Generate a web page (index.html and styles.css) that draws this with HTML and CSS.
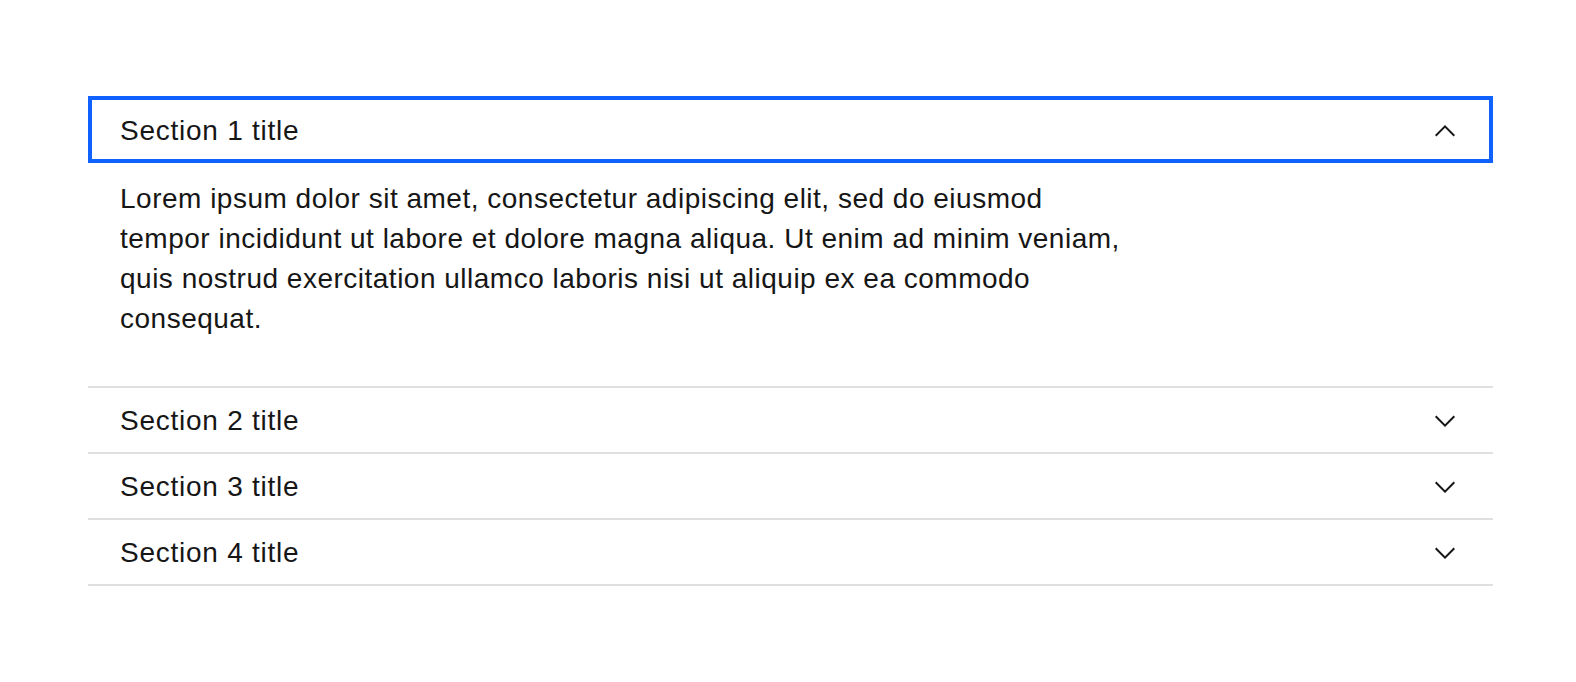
FILE: index.html
```html
<!DOCTYPE html>
<html lang="en">
<head>
<meta charset="utf-8">
<title>Accordion</title>
<link rel="stylesheet" href="styles.css">
</head>
<body>
<ul class="accordion">
  <li class="item open">
    <button class="heading focused" type="button" aria-expanded="true">
      <span class="title">Section 1 title</span>
      <svg class="chev" viewBox="0 0 16 16" width="32" height="32" aria-hidden="true"><path d="M8 5L13 10 12.3 10.7 8 6.4 3.7 10.7 3 10z"/></svg>
    </button>
    <div class="content">
      <p>Lorem ipsum dolor sit amet, consectetur adipiscing elit, sed do eiusmod tempor incididunt ut labore et dolore magna aliqua. Ut enim ad minim veniam, quis nostrud exercitation ullamco laboris nisi ut aliquip ex ea commodo consequat.</p>
    </div>
  </li>
  <li class="item">
    <button class="heading" type="button" aria-expanded="false">
      <span class="title">Section 2 title</span>
      <svg class="chev" viewBox="0 0 16 16" width="32" height="32" aria-hidden="true"><path d="M8 11L3 6 3.7 5.3 8 9.6 12.3 5.3 13 6z"/></svg>
    </button>
  </li>
  <li class="item">
    <button class="heading" type="button" aria-expanded="false">
      <span class="title">Section 3 title</span>
      <svg class="chev" viewBox="0 0 16 16" width="32" height="32" aria-hidden="true"><path d="M8 11L3 6 3.7 5.3 8 9.6 12.3 5.3 13 6z"/></svg>
    </button>
  </li>
  <li class="item">
    <button class="heading" type="button" aria-expanded="false">
      <span class="title">Section 4 title</span>
      <svg class="chev" viewBox="0 0 16 16" width="32" height="32" aria-hidden="true"><path d="M8 11L3 6 3.7 5.3 8 9.6 12.3 5.3 13 6z"/></svg>
    </button>
  </li>
</ul>
</body>
</html>
```
FILE: styles.css
```css
* { box-sizing: border-box; }
html, body { margin: 0; padding: 0; background: #ffffff; }
body {
  font-family: "Liberation Sans", Arial, sans-serif;
  color: #161616;
  padding-top: 96px;
  padding-left: 88px;
}
.accordion {
  list-style: none;
  margin: 0;
  padding: 0;
  width: 1405px;
}
.item {
  border-top: 2px solid #e0e0e0;
}
.item:last-child {
  border-bottom: 2px solid #e0e0e0;
}
.heading {
  position: relative;
  display: flex;
  align-items: center;
  justify-content: space-between;
  width: 100%;
  height: 64px;
  margin: 0;
  padding: 2px 32px 0;
  border: 0;
  background: transparent;
  font: inherit;
  color: inherit;
  text-align: left;
  cursor: pointer;
}
.heading.focused::before {
  content: "";
  position: absolute;
  top: -2px;
  left: 0;
  right: 0;
  bottom: -1px;
  border: 4px solid #0f62fe;
}
.title {
  font-size: 28px;
  line-height: 40px;
  letter-spacing: 0.75px;
}
.chev {
  fill: #161616;
  flex: none;
}
.content {
  padding: 17px 26% 47px 32px;
}
.content p {
  margin: 0;
  font-size: 28px;
  line-height: 40px;
  letter-spacing: 0.5px;
}
```
